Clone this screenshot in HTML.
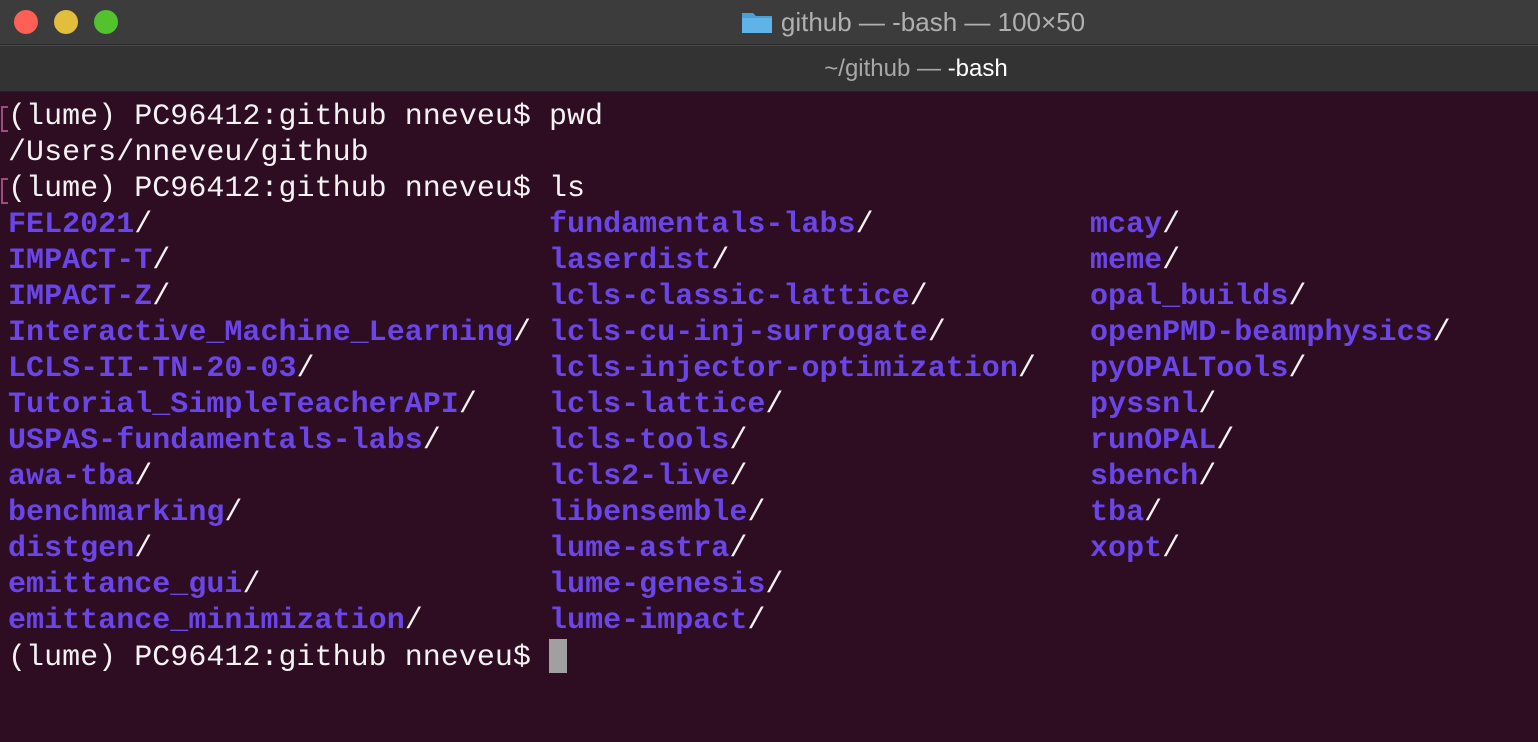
<!DOCTYPE html>
<html><head><meta charset="utf-8"><style>
html,body{margin:0;padding:0;width:1538px;height:742px;overflow:hidden;background:#2e0c22;font-family:"Liberation Sans",sans-serif}
.title{position:absolute;left:0;top:0;width:1538px;height:44px;background:#3c3c3c;border-bottom:1px solid #2a2a2a}
.tab{position:absolute;left:0;top:45px;width:1538px;height:47px;background:#333333;border-top:1px solid #4a4a4a;box-sizing:border-box;border-bottom:1px solid #222}
.dot{position:absolute;top:10px;width:24px;height:24px;border-radius:50%}
.tt{position:absolute;top:7px;left:0;width:1826px;text-align:center;color:#b0b0b0;font-size:26px;white-space:nowrap}
.st{position:absolute;top:9px;left:0;width:1832px;text-align:center;color:#a8a8a8;font-size:24px;white-space:nowrap}
pre{position:absolute;left:8px;top:99px;margin:0;font-family:"Liberation Mono",monospace;font-size:30px;line-height:36px;color:#f2f2f2;letter-spacing:0.03px}
b{color:#6a45e8;font-weight:bold}
.mk{position:absolute;left:1px;width:5px;height:22px;border:2px solid #a04a80;border-right:none}
.cur{display:inline-block;width:18px;height:34px;background:#a0a0a0;vertical-align:-8px}
</style></head><body>
<div class="title">
<div class="dot" style="left:14px;background:#fe5f57"></div>
<div class="dot" style="left:54px;background:#e2bd3e"></div>
<div class="dot" style="left:94px;background:#52c22f"></div>
<div class="tt"><svg width="32" height="24" viewBox="0 0 32 24" style="vertical-align:-3px;margin-right:8px"><path d="M1 3h11l3 3h16v17H1z" fill="#4a9fd8"/><path d="M1 8h30v15H1z" fill="#5fb3e6"/></svg>github — -bash — 100×50</div>
</div>
<div class="tab"><div class="st">~/github — <span style="color:#fff">-bash</span></div></div>
<div class="mk" style="top:106px"></div>
<div class="mk" style="top:178px"></div>
<pre>(lume) PC96412:github nneveu$ pwd
/Users/nneveu/github
(lume) PC96412:github nneveu$ ls
<b>FEL2021</b>/                      <b>fundamentals-labs</b>/            <b>mcay</b>/
<b>IMPACT-T</b>/                     <b>laserdist</b>/                    <b>meme</b>/
<b>IMPACT-Z</b>/                     <b>lcls-classic-lattice</b>/         <b>opal_builds</b>/
<b>Interactive_Machine_Learning</b>/ <b>lcls-cu-inj-surrogate</b>/        <b>openPMD-beamphysics</b>/
<b>LCLS-II-TN-20-03</b>/             <b>lcls-injector-optimization</b>/   <b>pyOPALTools</b>/
<b>Tutorial_SimpleTeacherAPI</b>/    <b>lcls-lattice</b>/                 <b>pyssnl</b>/
<b>USPAS-fundamentals-labs</b>/      <b>lcls-tools</b>/                   <b>runOPAL</b>/
<b>awa-tba</b>/                      <b>lcls2-live</b>/                   <b>sbench</b>/
<b>benchmarking</b>/                 <b>libensemble</b>/                  <b>tba</b>/
<b>distgen</b>/                      <b>lume-astra</b>/                   <b>xopt</b>/
<b>emittance_gui</b>/                <b>lume-genesis</b>/
<b>emittance_minimization</b>/       <b>lume-impact</b>/
(lume) PC96412:github nneveu$ <span class="cur"></span></pre>
</body></html>
